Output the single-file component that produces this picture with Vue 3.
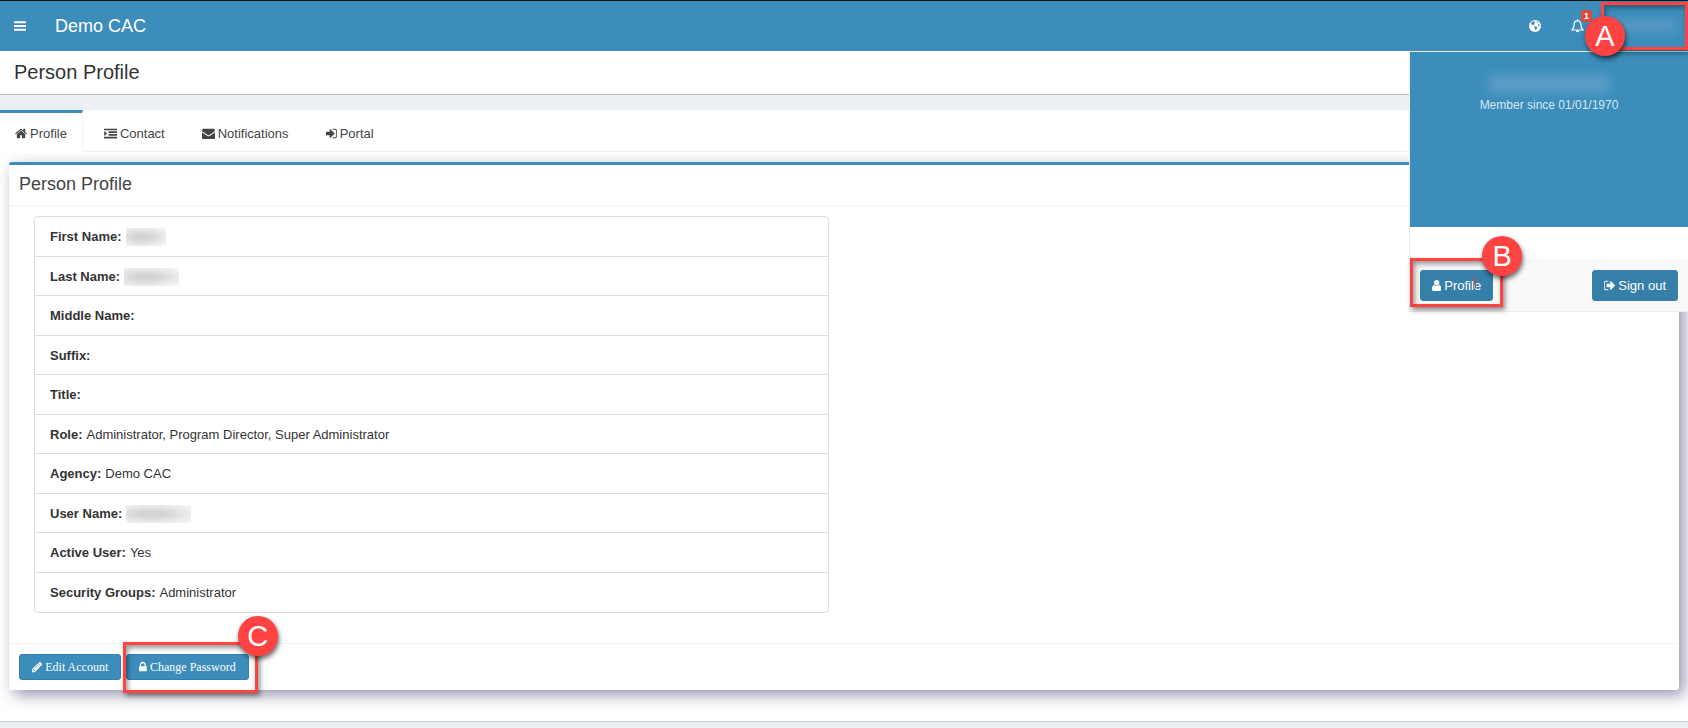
<script setup>
import { h } from 'vue'

// Each glyph: path data plus the horizontal extent [start, width] it occupies on a 1792-unit em.
const glyphs = {
  bars: [128, 1536, 'M128 288h1536v256H128zM128 768h1536v256H128zM128 1248h1536v256H128z'],
  home: [64, 1664, 'M1472 992v480q0 26-19 45t-45 19h-384v-384h-256v384h-384q-26 0-45-19t-19-45v-480q0-1 .5-3t.5-3l575-474 575 474q1 2 1 6zm223-69l-62 74q-8 9-21 11h-3q-13 0-21-7l-692-577-692 577q-12 8-24 7-13-2-21-11l-62-74q-8-10-7-23.5t11-21.5l719-599q32-26 76-26t76 26l244 204v-195q0-14 9-23t23-9h192q14 0 23 9t9 23v408l219 182q10 8 11 21.5t-7 23.5z'],
  indent: [0, 1792, 'M0 224h1792v240H0zM640 592h1152v240H640zM640 960h1152v240H640zM0 1328h1792v240H0zM30 560l420 336-420 336z'],
  envelope: [0, 1792, 'M1792 710v794q0 66-47 113t-113 47h-1472q-66 0-113-47t-47-113v-794q44 49 101 87 362 246 497 345 57 42 92.5 65.5t94.5 48 110 24.5h2q51 0 110-24.5t94.5-48 92.5-65.5q170-123 498-345 57-39 100-87zm0-294q0 79-49 151t-122 123q-376 261-468 325-10 7-42.5 31t-54 38.5-52 32.5-57.5 27-50 9h-2q-23 0-50-9t-57.5-27-52-32.5-54-38.5-42.5-31q-91-64-262-182.5t-205-142.5q-62-42-117-115.5t-55-136.5q0-78 41.5-130t118.5-52h1472q65 0 112.5 47t47.5 113z'],
  signin: [128, 1536, 'M1312 896q0 26-19 45l-544 544q-19 19-45 19t-45-19-19-45v-288h-448q-26 0-45-19t-19-45v-384q0-26 19-45t45-19h448v-288q0-26 19-45t45-19 45 19l544 544q19 19 19 45zm352-352v704q0 119-84.5 203.5t-203.5 84.5h-320q-13 0-22.5-9.5t-9.5-22.5q0-4-1-20t-.5-26.5 3-23.5 10-19.5 20.5-6.5h320q66 0 113-47t47-113v-704q0-66-47-113t-113-47h-312l-11.5-1-11.5-3-8-5.5-7-9-2-13.5q0-4-1-20t-.5-26.5 3-23.5 10-19.5 20.5-6.5h320q119 0 203.5 84.5t84.5 203.5z'],
  signout: [96, 1536, 'M704 1440q0 4 1 20t.5 26.5-3 23.5-10 19.5-20.5 6.5h-320q-119 0-203.5-84.5t-84.5-203.5v-704q0-119 84.5-203.5t203.5-84.5h320q13 0 22.5 9.5t9.5 22.5q0 4 1 20t.5 26.5-3 23.5-10 19.5-20.5 6.5h-320q-66 0-113 47t-47 113v704q0 66 47 113t113 47h312l11.5 1 11.5 3 8 5.5 7 9 2 13.5zm928-544q0 26-19 45l-544 544q-19 19-45 19t-45-19-19-45v-288h-448q-26 0-45-19t-19-45v-384q0-26 19-45t45-19h448v-288q0-26 19-45t45-19 45 19l544 544q19 19 19 45z'],
  lock: [320, 1152, 'M640 768h512v-192q0-106-75-181t-181-75-181 75-75 181v192zm832 96v576q0 40-28 68t-68 28h-960q-40 0-68-28t-28-68v-576q0-40 28-68t68-28h32v-192q0-184 132-316t316-132 316 132 132 316v192h32q40 0 68 28t28 68z'],
  pencil: [128, 1536, 'M491 1536l91-91-235-235-91 91v107h128v128h107zm523-928q0-22-22-22-10 0-17 7l-542 542q-7 7-7 17 0 22 22 22 10 0 17-7l542-542q7-7 7-17zm-54-192l416 416-832 832h-416v-416zm683 96q0 53-37 90l-166 166-416-416 166-165q36-38 90-38 53 0 91 38l235 234q37 39 37 91z'],
  user: [256, 1280, 'M1536 1399q0 109-62.5 187t-150.5 78h-854q-88 0-150.5-78t-62.5-187q0-85 8.5-160.5t31.5-152 58.5-131 94-89 134.5-34.5q131 128 313 128t313-128q76 0 134.5 34.5t94 89 58.5 131 31.5 152 8.5 160.5zm-256-887q0 159-112.5 271.5t-271.5 112.5-271.5-112.5-112.5-271.5 112.5-271.5 271.5-112.5 271.5 112.5 112.5 271.5z']
}

const Icon = (props) => {
  const [x, width, d] = glyphs[props.name]
  return h('svg', { class: ['icon', props.name], viewBox: `${x} 0 ${width} 1792`, 'aria-hidden': 'true' }, [
    h('path', { d, fill: 'currentColor' })
  ])
}
Icon.props = ['name']

const tabs = [
  { label: 'Profile', icon: 'home' },
  { label: 'Contact', icon: 'indent' },
  { label: 'Notifications', icon: 'envelope' },
  { label: 'Portal', icon: 'signin' }
]

const fields = [
  { label: 'First Name:', hidden: 'first' },
  { label: 'Last Name:', hidden: 'last' },
  { label: 'Middle Name:' },
  { label: 'Suffix:' },
  { label: 'Title:' },
  { label: 'Role:', value: 'Administrator, Program Director, Super Administrator' },
  { label: 'Agency:', value: 'Demo CAC' },
  { label: 'User Name:', hidden: 'login' },
  { label: 'Active User:', value: 'Yes' },
  { label: 'Security Groups:', value: 'Administrator' }
]
</script>

<template>
  <div class="page">
    <header class="topbar">
      <button class="toggle" type="button" aria-label="Toggle navigation"><Icon name="bars" /></button>
      <a class="brand" href="#">Demo CAC</a>
      <nav class="tools">
        <button class="tool" type="button" aria-label="Language">
          <svg class="globe" viewBox="0 0 12 12" aria-hidden="true">
            <circle cx="6" cy="6" r="6" fill="#fff" />
            <path d="M2.4 2 4.600 1.200 6.200 2 5.400 3 5.600 4 4.400 4.600 4.800 5.400 3.600 5.200 2.200 4zM7.400 1.200 9 2 8.400 3 7.600 2.400zM5.600 6.200 7.400 6.400 8.600 7.400 7.600 8.800 6.400 10.600 6.200 9 5.200 7.600zM8.800 4.200l1.600.400.400 1.600-1.200.400z" fill="#3c8dbc" />
          </svg>
        </button>
        <button class="tool" type="button" aria-label="Alerts">
          <svg class="bell" viewBox="0 0 13 14" fill="none" stroke="#fff" stroke-width="1.2" aria-hidden="true">
            <path d="M6.500 0.300v1.500M1 11h11C10.600 9.800 9.900 8.500 9.900 5.500 9.900 3.300 8.600 1.900 6.500 1.900S3.100 3.300 3.100 5.500C3.100 8.500 2.400 9.800 1 11z" />
            <path d="M4.800 11.500h3.400a1.700 1.700 0 0 1-3.400 0z" fill="#fff" stroke="none" />
          </svg>
          <span class="count">1</span>
        </button>
        <button class="account" type="button" aria-label="Account menu">
          <span class="smudge"></span>
          <span class="marker">A</span>
        </button>
      </nav>
      <div class="menu">
        <div class="menu-head">
          <span class="member-name"></span>
          <p>Member since 01/01/1970</p>
        </div>
        <div class="menu-foot">
          <div class="callout callout-profile">
            <a class="btn" href="#"><Icon name="user" />Profile</a>
            <span class="caret"></span>
            <span class="frame"></span>
            <span class="marker">B</span>
          </div>
          <a class="btn" href="#"><Icon name="signout" />Sign out</a>
        </div>
      </div>
    </header>

    <div class="page-title"><h1>Person Profile</h1></div>

    <main>
      <nav class="tabs">
        <a v-for="(tab, i) in tabs" :key="tab.label" href="#" :class="{ active: i === 0 }">
          <Icon :name="tab.icon" />{{ tab.label }}
        </a>
      </nav>
      <section class="box">
        <h2>Person Profile</h2>
        <div class="box-body">
          <ul>
            <li v-for="f in fields" :key="f.label">
              <b>{{ f.label }}</b>
              <span v-if="f.hidden" class="redacted" :class="f.hidden"></span>
              <span v-else>{{ f.value }}</span>
            </li>
          </ul>
        </div>
        <div class="box-foot">
          <button class="btn small" type="button"><Icon name="pencil" />Edit Account</button>
          <div class="callout callout-password">
            <button class="btn small" type="button"><Icon name="lock" />Change Password</button>
            <span class="frame"></span>
            <span class="marker">C</span>
          </div>
        </div>
      </section>
    </main>
  </div>
</template>

<style>
html { background: #ecf0f5; }
body { margin: 0; overflow-x: hidden; }
</style>

<style scoped>
* { box-sizing: border-box; }
.page {
  font-family: "Liberation Sans", Arial, sans-serif;
  font-size: 13px;
  line-height: 20px;
  color: #333;
  min-height: 100vh;
  background: #ecf0f5;
}
a { color: inherit; text-decoration: none; }
button { font: inherit; color: inherit; background: none; border: 0; padding: 0; }
.icon { width: auto; height: 13px; flex: none; display: block; }

.topbar {
  position: relative;
  z-index: 2;
  display: flex;
  align-items: center;
  height: 51px;
  border-top: 1px solid #111;
  background: #3c8dbc;
  color: #fff;
}
.toggle { margin: 0 29px 0 14px; }
.toggle .icon { height: 14px; }
.brand { font-size: 18px; }
.tools { position: relative; z-index: 1; display: flex; align-items: center; align-self: stretch; margin-left: auto; }
.tool { position: relative; display: block; width: 42px; height: 50px; }
.globe { width: 12px; height: 12px; display: block; margin: 0 auto; }
.bell { width: 13px; height: 14px; display: block; margin: 0 auto; }
.count {
  position: absolute;
  left: 25px;
  top: 9px;
  width: 11px;
  height: 12px;
  border-radius: 2px;
  background: #dd4b39;
  font-size: 9px;
  line-height: 12px;
  font-weight: bold;
  text-align: center;
}
.account {
  position: relative;
  width: 87px;
  height: 48px;
  margin: 0 0 0 3px;
  border: 3px solid #ff4242;
  box-shadow: 2px 3px 5px rgba(0, 0, 0, .4), inset 2px 3px 5px rgba(0, 0, 0, .35);
}
.smudge { display: block; width: 60px; height: 14px; margin-left: 12px; background: #5f9dc4; filter: blur(5px); opacity: .7; }
.marker {
  position: absolute;
  width: 40px;
  height: 40px;
  border-radius: 50%;
  background: #ff4242;
  box-shadow: 1px 3px 5px rgba(0, 0, 0, .6);
  color: #fff;
  font: 29px/40px "Liberation Sans", Arial, sans-serif;
  text-align: center;
}
.account .marker { left: -19px; top: 11px; }

.menu {
  position: absolute;
  right: 0;
  top: 50px;
  width: 279px;
  border: solid #eee;
  border-width: 1px 0 1px 1px;
  background: #fff;
}
.menu-head { height: 175px; padding-top: 23px; background: #3c8dbc; text-align: center; }
.member-name { display: block; width: 120px; height: 18px; margin: 0 auto; background: #67a4ca; filter: blur(5px); opacity: .7; }
.menu-head p { margin: 2px 0 0; font-size: 12px; color: #d8e8f2; }
.menu-foot {
  display: flex;
  justify-content: space-between;
  margin-top: 32px;
  padding: 11px 10px;
  padding-bottom: 10px;
  background: #f9f9f9;
}
.btn {
  display: flex;
  align-items: center;
  gap: 3px;
  height: 31px;
  padding: 0 11px;
  border: 1px solid #367fa9;
  border-radius: 3px;
  background: #367fa9;
  color: #fff;
}
.callout { position: relative; }
.frame { position: absolute; border: 3px solid #ff4242; pointer-events: none; box-shadow: 2px 3px 5px rgba(0, 0, 0, .45), inset 2px 3px 5px rgba(0, 0, 0, .4); }
.callout-profile .frame { inset: -12px -10px -6px -10px; }
.callout-profile .marker { right: -29px; top: -34px; }
.caret { position: absolute; left: 55px; top: 6px; width: 1px; height: 12px; background: #e0454c; }

.page-title { padding: 5px 14px 6px; height: 44px; border-bottom: 1px solid #b8b8b8; background: #fff; }
h1 { margin: 0; font-size: 20px; line-height: 32px; font-weight: normal; }
main { margin-top: 15px; padding-bottom: 31px; background: #fff; box-shadow: 0 1px 1px rgba(0, 0, 0, .12); }
.tabs { display: flex; gap: 5px; height: 42px; border-bottom: 1px solid #f4f4f4; color: #444; }
.tabs a { display: flex; align-items: center; gap: 3px; padding: 6px 16px 0; }
.tabs .active { height: 43px; padding: 1px 15px 0; border-top: 3px solid #3c8dbc; border-right: 1px solid #f4f4f4; background: #fff; }
.box {
  margin: 10px 9px 0;
  border-top: 3px solid #3c8dbc;
  border-radius: 3px;
  background: #fff;
  box-shadow: 5px 5px 15px rgba(60, 60, 110, .55);
}
h2 { margin: 0; padding: 9px 10px 10px; border-bottom: 1px solid #f4f4f4; color: #444; font-size: 18px; line-height: 21px; font-weight: normal; }
.box-body { padding: 10px 25px 30px; }
ul {
  display: grid;
  grid-auto-rows: 1fr;
  width: calc(50% - 15px);
  min-height: 397px;
  margin: 0;
  padding: 0;
  list-style: none;
  border: 1px solid #ddd;
  border-radius: 4px;
}
li { display: flex; align-items: center; gap: 4px; padding: 2px 15px 0; border-bottom: 1px solid #ddd; }
li:last-child { border-bottom: 0; }
.redacted { height: 18px; background: radial-gradient(ellipse at 40% 50%, #d3d3d5 20%, #ececec 70%, #f9f9f9); }
.first { width: 40px; }
.last { width: 55px; }
.login { width: 65px; }
.box-foot { display: flex; gap: 5px; padding: 10px; border-top: 1px solid #f4f4f4; }
.small { height: 26px; padding: 0 12px; background: #3c8dbc; font-family: "Liberation Serif", "Times New Roman", serif; font-size: 12px; }
.small .icon { height: 12px; }
.callout-password .frame { inset: -12px -9px -13px -3px; }
.callout-password .marker { right: -29px; top: -38px; }
</style>
